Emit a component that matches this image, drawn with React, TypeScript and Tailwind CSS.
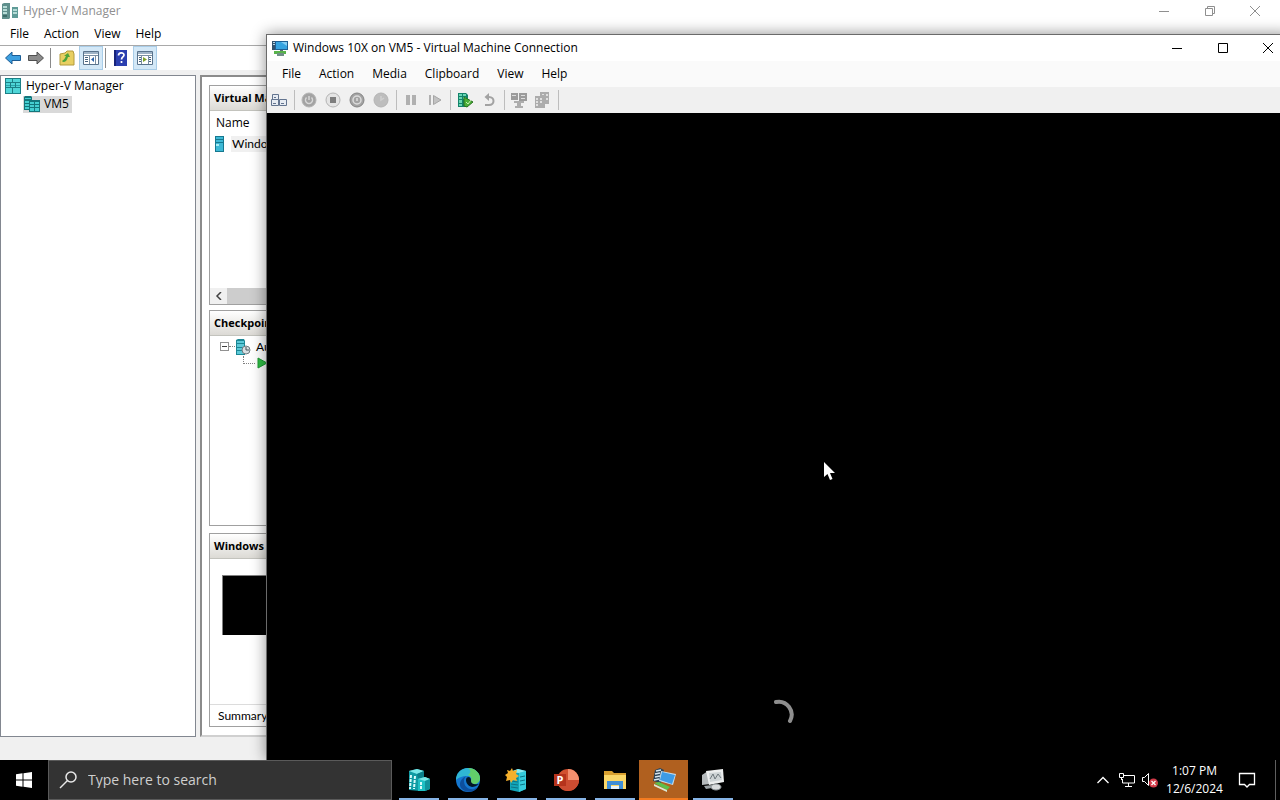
import React from 'react';

interface IconProps {
  className?: string;
}

/* ---------- Icons ---------- */

const ServerPairIcon: React.FC<IconProps> = ({ className = 'h-4 w-4' }) => (
  <svg className={className} viewBox="0 0 16 16" aria-hidden="true">
    <path d="M0 1l2-1h6v15l-1 1H0z" fill="#5f8f8c" />
    <path d="M1 3h4v2H1zM1 6h4v2H1zM1 9h4v2H1z" fill="#b5dbd6" />
    <path d="M1 12h4v2H1z" fill="#3c6c69" />
    <path d="M10 4h6v11h-6z" fill="#5f9b97" />
    <path d="M11 6h4v2h-4zM11 9h4v2h-4z" fill="#b5dbd6" />
  </svg>
);

const ServerTableIcon: React.FC<IconProps> = ({ className = 'h-4 w-4' }) => (
  <svg className={className} viewBox="0 0 16 16" aria-hidden="true">
    <path d="M0 0h16v16H0z" fill="#1c7f86" />
    <path d="M1 1h6v3H1zM8 1h7v3H8zM1 5h4v4H1zM6 5h4v4H6zM11 5h4v4h-4zM1 10h6v5H1zM8 10h7v5H8z" fill="#4fd6d8" />
    <path d="M1 7h4v1H1zM6 7h4v1H6zM11 7h4v1h-4z" fill="#2aa5ac" />
  </svg>
);

const HostIcon: React.FC<IconProps> = ({ className = 'h-4 w-4' }) => (
  <svg className={className} viewBox="0 0 16 16" aria-hidden="true">
    <path d="M0 1l1-1h6l1 1v3h8v12H5v-2H0z" fill="#14767c" />
    <path d="M1 2h6v1H1zM1 5h4v2H1zM1 8h4v2H1zM1 11h4v2H1z" fill="#45cfd2" />
    <path d="M6 6h4v2H6zM6 9h4v2H6zM6 12h4v3H6zM11 6h4v2h-4zM11 9h4v2h-4zM11 12h4v3h-4z" fill="#45cfd2" />
  </svg>
);

const MachineIcon: React.FC<IconProps> = ({ className = 'h-4 w-4' }) => (
  <svg className={className} viewBox="0 0 16 16" aria-hidden="true">
    <path d="M3 0h9v16H3z" fill="#16788f" />
    <path d="M4 1h7v2H4zM4 4h7v2H4zM4 7h7v8H4z" fill="#3db9d6" />
    <path d="M4 8h3v2H4z" fill="#a6ecf5" />
  </svg>
);

const CheckpointIcon: React.FC<IconProps> = ({ className = 'h-4 w-4' }) => (
  <svg className={className} viewBox="0 0 16 16" aria-hidden="true">
    <path d="M0 1l2-1h6l1 2v14H0z" fill="#1b8795" />
    <path d="M1 2h7v2H1zM1 5h7v3H1zM1 9h7v2H1zM1 12h7v3H1z" fill="#5cc9d8" />
    <circle cx="10" cy="11" r="4" fill="#d9dfe2" stroke="#6f7b80" />
    <path d="M10 8v3h3" fill="none" stroke="#46555b" />
  </svg>
);

const ArrowIcon: React.FC<{ back?: boolean }> = ({ back }) => (
  <svg className="h-4 w-4" viewBox="0 0 16 16" aria-hidden="true">
    {back ? (
      <path d="M.5 8L7 2v3.500h8.500v5H7V14z" fill="#3c9fe0" stroke="#1c5c94" />
    ) : (
      <path d="M15.500 8L9 2v3.500H.5v5H9V14z" fill="#8b8b8b" stroke="#4f4f4f" />
    )}
  </svg>
);

const FolderUpIcon = () => (
  <svg className="h-4 w-4" viewBox="0 0 16 16" aria-hidden="true">
    <path d="M1 4l5-1 2-2h6l1 3v11H1z" fill="#e8cf62" stroke="#b39a3c" />
    <path d="M4 12c3 0 4-2 5-5h2L9 3 5 6h2c-1 2-2 4-4 5z" fill="#4da33a" />
  </svg>
);

const ConsoleTreeIcon = () => (
  <svg className="h-4 w-4" viewBox="0 0 16 16" aria-hidden="true">
    <path d="M.5 1.500h15v13H.5z" fill="#fff" stroke="#59738c" />
    <path d="M1 2h14v2H1z" fill="#9fb4c7" />
    <path d="M6.500 5v9M12.500 5v9M1 5.500h14" stroke="#7b90a3" />
    <path d="M2 7.500h3M2 9.500h3M2 11.500h3" stroke="#47637e" />
    <path d="M11 7v5L8 9.500z" fill="#2b62a8" />
  </svg>
);

const HelpIcon = () => (
  <svg className="h-4 w-4" viewBox="0 0 16 16" aria-hidden="true">
    <path d="M1 0h13v16H1z" fill="#2b3fb0" />
    <path d="M1 0h2v16H1z" fill="#17237a" />
    <path d="M5.500 5.500c0-3.500 5.500-3.500 5.500-.5 0 2-2.500 2-2.500 4.500M8.500 11v2" fill="none" stroke="#fff" strokeWidth="1.700" />
  </svg>
);

const ActionPaneIcon = () => (
  <svg className="h-4 w-4" viewBox="0 0 16 16" aria-hidden="true">
    <path d="M.5 1.500h15v13H.5z" fill="#fff" stroke="#59738c" />
    <path d="M1 2h14v2H1z" fill="#9fb4c7" />
    <path d="M4.500 5v9M11.500 5v9M1 5.500h14" stroke="#7b90a3" />
    <path d="M2 7.500h2M2 9.500h2M2 11.500h2M12 7.500h2M12 9.500h2M12 11.500h2" stroke="#47637e" />
    <path d="M6 7v5l4-2.500z" fill="#7fa32b" />
  </svg>
);

const ConnectionIcon: React.FC<IconProps> = ({ className = 'h-4 w-4' }) => (
  <svg className={className} viewBox="0 0 16 16" aria-hidden="true">
    <path d="M0 1h5v9H0z" fill="#32506b" />
    <path d="M1 2h3v1H1zM1 4h3v1H1z" fill="#b9d6e6" />
    <path d="M3 1h13v9H3z" fill="#1f5f94" />
    <path d="M4 2h11v7H4z" fill="#36a3e0" />
    <path d="M9 2h6v4z" fill="#83cdf3" />
    <path d="M8 10h3v2H8z" fill="#5d6d77" />
    <path d="M2 11h12v3H2z" fill="#58b44a" />
    <path d="M5 13h7v3H5z" fill="#6f8f86" />
  </svg>
);

const CtrlAltDelIcon = () => (
  <svg className="h-4 w-4" viewBox="0 0 16 16" aria-hidden="true">
    <path d="M1.500 2.500h6v5h-6zM.5 7.500h7v6h-7zM8.500 7.500h7v6h-7z" fill="#e7ecf3" stroke="#63748f" />
    <path d="M3 5.500h2M2 11.500h3M10 11.500h3" stroke="#63748f" />
  </svg>
);

const RoundIcon: React.FC<{ kind: 'start' | 'stop' | 'shutdown' | 'save' }> = ({ kind }) => (
  <svg className="h-4 w-4" viewBox="0 0 16 16" aria-hidden="true">
    <circle
      cx="8"
      cy="8"
      r="7"
      fill={kind === 'stop' ? '#e4e4e4' : kind === 'save' ? '#bdbdbd' : '#a3a3a3'}
      stroke={kind === 'shutdown' ? '#858585' : '#b4b4b4'}
    />
    {kind === 'start' && <path d="M5.500 5.500a3.500 3.500 0 105 0M8 4v4" fill="none" stroke="#d8d8d8" strokeWidth="1.500" />}
    {kind === 'stop' && <path d="M5 5h6v6H5z" fill="#7d7d7d" />}
    {kind === 'shutdown' && (
      <>
        <circle cx="8" cy="8" r="4" fill="none" stroke="#dcdcdc" strokeWidth="1.500" />
        <path d="M8 6v3" stroke="#dcdcdc" strokeWidth="1.500" />
      </>
    )}
    {kind === 'save' && <path d="M8 4v4l3-2" fill="none" stroke="#cfcfcf" strokeWidth="1.500" />}
  </svg>
);

const PauseIcon = () => (
  <svg className="h-4 w-4" viewBox="0 0 16 16" aria-hidden="true">
    <path d="M3 3h4v10H3zM9 3h4v10H9z" fill="#b0b0b0" />
  </svg>
);

const ResetIcon = () => (
  <svg className="h-4 w-4" viewBox="0 0 16 16" aria-hidden="true">
    <path d="M2 3h2v10H2z" fill="#b0b0b0" />
    <path d="M6.500 3.500v9L14 8z" fill="#c2c2c2" stroke="#a6a6a6" />
  </svg>
);

const CheckpointNowIcon = () => (
  <svg className="h-4 w-4" viewBox="0 0 16 16" aria-hidden="true">
    <path d="M1 1h8l2 2v12H1z" fill="#13836a" />
    <path d="M2 2h3v2H2zM6 2h3v2H6zM2 5h3v2H2zM6 5h3v2H6zM2 8h3v3H2zM2 12h3v2H2z" fill="#69d6b4" />
    <path d="M7 5l9 5-6 5-3-1z" fill="#4bb037" stroke="#2a7222" />
    <path d="M9 10l2 2 3-4" fill="none" stroke="#c6efb5" />
  </svg>
);

const RevertIcon = () => (
  <svg className="h-4 w-4" viewBox="0 0 16 16" aria-hidden="true">
    <path d="M4 13h4c6 0 6-8 0-8H6" fill="none" stroke="#a2a2a2" strokeWidth="2" />
    <path d="M8 1v8L3.500 5z" fill="#a2a2a2" />
  </svg>
);

const EnhancedIcon = () => (
  <svg className="h-4 w-4" viewBox="0 0 16 16" aria-hidden="true">
    <path d="M0 1h7v7H0zM8 1h8v8H8z" fill="#9b9b9b" />
    <path d="M1 3h4v1H1zM10 3h4v1h-4zM10 6h4v1h-4z" fill="#dcdcdc" />
    <path d="M3 9h10v2H3zM6 11h4v3H6zM4 14h8v2H4z" fill="#adadad" />
  </svg>
);

const ShareIcon = () => (
  <svg className="h-4 w-4" viewBox="0 0 16 16" aria-hidden="true">
    <path d="M5 0h9v12H5zM0 4h10v12H0z" fill="#acacac" />
    <path d="M1 6h2v2H1zM5 6h2v2H5zM1 9h2v2H1zM5 9h2v2H5zM1 12h2v2H1zM7 2h2v1H7zM11 2h2v2h-2zM11 6h2v2h-2z" fill="#e0e0e0" />
  </svg>
);

const MinimizeIcon = () => (
  <svg className="h-3 w-3" viewBox="0 0 12 12" aria-hidden="true">
    <path d="M1 6.500h10" stroke="currentColor" />
  </svg>
);

const MaximizeIcon = () => (
  <svg className="h-3 w-3" viewBox="0 0 12 12" aria-hidden="true">
    <path d="M1.500 1.500h9v9h-9z" fill="none" stroke="currentColor" />
  </svg>
);

const RestoreIcon = () => (
  <svg className="h-3 w-3" viewBox="0 0 12 12" aria-hidden="true">
    <path d="M1.500 3.500h7v7h-7zM3.500 3.500v-2h7v7h-2" fill="none" stroke="currentColor" />
  </svg>
);

const CloseIcon = () => (
  <svg className="h-3 w-3" viewBox="0 0 12 12" aria-hidden="true">
    <path d="M1 1l10 10M11 1L1 11" stroke="currentColor" />
  </svg>
);

/* ---------- Taskbar icons ---------- */

const HyperVTaskIcon = () => (
  <svg className="h-6 w-6" viewBox="0 0 24 24" aria-hidden="true">
    <path d="M2 3l8-2 7 2v6l-4 14-11-1z" fill="#109ca4" />
    <path d="M2 3l8-2 7 2-7 3z" fill="#7ce9e9" />
    <path d="M10 6l7-3v6l-6 2z" fill="#0b7f8a" />
    <path d="M11 11l7-2 5 2v10l-5 2h-7z" fill="#1fc0c4" />
    <path d="M11 11l7-2 5 2-5 2z" fill="#7ae6e6" />
    <path d="M18 13l5-2v10l-5 2z" fill="#11939c" />
    <path d="M4 7l-1 14M8 8L7 21M14 14v7" stroke="#d9fbfa" strokeWidth="2" strokeDasharray="3 1" />
  </svg>
);

const EdgeIcon = () => (
  <svg className="h-6 w-6" viewBox="0 0 24 24" aria-hidden="true">
    <circle cx="12" cy="12" r="12" fill="#1577d0" />
    <path d="M0 12C0 5 5 0 12 0s12 5 12 10c0 4-3 6-6 6s-4-1-3-3c1-3-1-5-4-5-5 0-9 2-11 4z" fill="#2fb6d4" />
    <path d="M12 0c7 0 12 5 12 10 0 4-3 6-6 6s-4-1-3-3c1-3 0-5-3-6 3-2 3-5 0-7z" fill="#62cf6a" />
    <path d="M8 13c0 6 5 9 10 8l4-2c-4 6-12 6-16 2-4-4-2-10 4-13-1 1-2 3-2 5z" fill="#0d4f9e" />
    <path d="M10 12c0-2 1-3 3-3 2 1 2 2 2 4s2 4 8 3c-2 2-5 3-7 3-4-1-6-4-6-7z" fill="#031627" />
  </svg>
);

const ServerStarIcon = () => (
  <svg className="h-6 w-6" viewBox="0 0 24 24" aria-hidden="true">
    <path d="M5 4l8-3 8 2v18l-7 3-9-2z" fill="#12a5b8" />
    <path d="M14 5l7-2v18l-7 3z" fill="#35cbdc" />
    <path d="M5 4l8-3 8 2-7 2z" fill="#8cecf2" />
    <path d="M6 10l7 1M6 13l7 1M6 16l7 1M6 19l7 1M15 9l5-1M15 13l5-1M15 17l5-1" stroke="#0b7486" />
    <path d="M7 0l1 3 4-1-1 4 3 2-3 2 1 3-4-1-2 3-1-3-4 1 1-4-2-2 3-2-1-3 3 1z" fill="#f6b02c" />
  </svg>
);

const PowerPointIcon = () => (
  <svg className="h-6 w-6 overflow-visible" viewBox="0 0 24 24" aria-hidden="true">
    <circle cx="14" cy="12" r="11" fill="#d2512f" />
    <path d="M14 1a11 11 0 0111 11H14z" fill="#f4906f" />
    <path d="M3 12h22a11 11 0 01-22 0z" fill="#cc4c31" />
    <path d="M0 6h12v12H0z" fill="#b5331c" />
    <text x="6" y="16" textAnchor="middle" fontSize="11" fontWeight="700" fill="#fff" fontFamily="Open Sans, sans-serif">
      P
    </text>
  </svg>
);

const ExplorerIcon = () => (
  <svg className="h-6 w-6" viewBox="0 0 24 24" aria-hidden="true">
    <path d="M1 3h8l2 2h12v16H1z" fill="#d9a02f" />
    <path d="M1 7h22v14H1z" fill="#fbd768" />
    <path d="M4 21v-8h16v8h-4v-4H8v4z" fill="#3f8ed6" />
    <path d="M8 18h8v3H8z" fill="#e9f3fb" />
  </svg>
);

const VmConnectTaskIcon = () => (
  <svg className="h-6 w-6" viewBox="0 0 24 24" aria-hidden="true">
    <path d="M3 2l5-2 4 2-3 13-8-2z" fill="#2c4256" />
    <path d="M4 3l5-1M3 6l5-1M3 9l5-1M2 12l5-1" stroke="#d7e5ee" strokeWidth="1.500" />
    <path d="M9 3l15 3-3 11-14-4z" fill="#c5dcec" />
    <path d="M10 4l13 3-3 9-12-4z" fill="#3d9be6" />
    <path d="M2 15l5-1 11 5-3 3z" fill="#5cc04b" />
    <path d="M2 16l13 6v2L2 18z" fill="#dbe9d5" />
  </svg>
);

const MonitorTaskIcon = () => (
  <svg className="h-6 w-6" viewBox="0 0 24 24" aria-hidden="true">
    <path d="M1 7l6-4 2 13-8 1z" fill="#b5babc" />
    <path d="M5 3l17-2 1 13-15 3z" fill="#eceeee" />
    <path d="M8 5l12-1 1 8-12 2z" fill="#cdd3d5" />
    <path d="M9 11l3-5 2 5 3-5 3 4" fill="none" stroke="#6e787d" />
    <path d="M3 18l8-1v3l-6 1z" fill="#9da4a7" />
    <ellipse cx="15" cy="19" rx="5" ry="3" fill="#d8dbdc" stroke="#8d9497" />
  </svg>
);

/* ---------- Shared pieces ---------- */

const MenuBar: React.FC<{ label: string; items: string[]; className: string }> = ({ label, items, className }) => (
  <nav aria-label={label} className={`flex items-center ${className}`}>
    {items.map((item) => (
      <button key={item} type="button">
        {item}
      </button>
    ))}
  </nav>
);

const CaptionButtons: React.FC<{ restored?: boolean }> = ({ restored }) => (
  <div className="ml-auto flex self-stretch">
    <button type="button" aria-label="Minimize" className="flex w-[46px] items-center justify-center">
      <MinimizeIcon />
    </button>
    <button type="button" aria-label={restored ? 'Maximize' : 'Restore'} className="flex w-[45px] items-center justify-center">
      {restored ? <MaximizeIcon /> : <RestoreIcon />}
    </button>
    <button type="button" aria-label="Close" className="flex w-[46px] items-center justify-center">
      <CloseIcon />
    </button>
  </div>
);

const PanelHeader: React.FC<{ children: React.ReactNode }> = ({ children }) => (
  <h2 className="flex h-[25px] items-center border-b border-[#c3c3bd] bg-linear-to-b from-white to-[#dcdad5] pl-1 text-[11px] font-bold whitespace-nowrap">
    {children}
  </h2>
);

/* ---------- Hyper-V Manager ---------- */

const HyperVManager = () => (
  <section aria-label="Hyper-V Manager" className="flex h-full flex-col bg-white">
    <header className="flex h-[22px] items-center px-0.5 text-[#8f8f8f]">
      <ServerPairIcon className="h-4 w-4" />
      <h1 className="ml-[5px]">Hyper-V Manager</h1>
      <CaptionButtons />
    </header>
    <MenuBar label="Manager menu" items={['File', 'Action', 'View', 'Help']} className="h-[23px] gap-[15px] pl-2.5" />

    <div className="flex h-[25px] shrink-0 items-center border-t border-[#a9a9a9] pl-0.5">
      <button type="button" aria-label="Back" className="flex h-6 w-[22px] items-center justify-center">
        <ArrowIcon back />
      </button>
      <button type="button" aria-label="Forward" className="flex h-6 w-6 items-center justify-center">
        <ArrowIcon />
      </button>
      <span className="mr-1 ml-0.5 h-5 w-px bg-[#8a8a8a]" />
      <button type="button" aria-label="Up one level" className="flex h-6 w-6 items-center justify-center">
        <FolderUpIcon />
      </button>
      <button type="button" aria-label="Console tree" className="flex h-6 w-6 items-center justify-center border border-[#a9cde8] bg-[#d3e8f7]">
        <ConsoleTreeIcon />
      </button>
      <span className="mr-[3px] ml-0.5 h-5 w-px bg-[#8a8a8a]" />
      <button type="button" aria-label="Help topics" className="flex h-6 w-6 items-center justify-center">
        <HelpIcon />
      </button>
      <button type="button" aria-label="Action pane" className="flex h-6 w-6 items-center justify-center border border-[#a9cde8] bg-[#d3e8f7]">
        <ActionPaneIcon />
      </button>
    </div>

    <div className="flex min-h-0 flex-1 gap-1 bg-[#f0f0f0] pt-[5px]">
      <aside className="w-[196px] shrink-0 border border-[#828790] bg-white pt-px">
        <ul>
          <li className="flex h-[18px] items-center gap-[5px] pl-1">
            <ServerTableIcon className="h-4 w-4" />
            Hyper-V Manager
          </li>
          <li className="flex h-[18px] items-center pl-[22px]">
            <span className="flex h-[17px] items-center gap-1 bg-[#d9d9d9] pr-[3px] pl-px">
              <HostIcon className="h-4 w-4" />
              VM5
            </span>
          </li>
        </ul>
      </aside>

      <main className="flex flex-1 flex-col border-2 border-[#8b8b8b] border-b-[#d0d0d0] bg-white px-[7px] pt-2 pb-2">
        <section className="flex flex-[220] flex-col border border-[#a0a0a0]">
          <PanelHeader>Virtual Machines</PanelHeader>
          <table className="w-full text-left">
            <thead>
              <tr className="h-[23px]">
                <th className="pl-1.5 font-normal">Name</th>
              </tr>
            </thead>
            <tbody>
              <tr className="h-5">
                <td className="pl-0.5">
                  <span className="flex items-center gap-[3px] font-['Lato','Open_Sans',sans-serif]">
                    <MachineIcon className="h-4 w-4" />
                    <span className="bg-[#f0f0f0] px-px">Windows 10X</span>
                  </span>
                </td>
              </tr>
            </tbody>
          </table>
          <div className="mt-auto flex h-4 bg-[#f0f0f0]">
            <button type="button" aria-label="Scroll left" className="flex w-[17px] items-center justify-center">
              <svg className="h-2 w-2" viewBox="0 0 8 8" aria-hidden="true">
                <path d="M6 0L2 4l4 4" fill="none" stroke="#404040" strokeWidth="1.500" />
              </svg>
            </button>
            <span className="w-1/2 bg-[#cdcdcd]" />
          </div>
        </section>

        <section className="mt-[5px] flex-[216] border border-[#a0a0a0]">
          <PanelHeader>Checkpoints</PanelHeader>
          <ul className="pt-0.5 font-['Lato','Open_Sans',sans-serif]">
            <li className="flex h-[18px] items-center pl-2.5">
              <button type="button" aria-label="Collapse" className="flex h-[9px] w-[9px] items-center justify-center border border-[#919191]">
                <span className="h-px w-[5px] bg-[#404040]" />
              </button>
              <span className="mr-px w-1.5 border-t border-dotted border-[#808080]" />
              <CheckpointIcon className="h-4 w-4" />
              <span className="ml-1 whitespace-nowrap">Automatic Checkpoint</span>
            </li>
            <li className="flex h-4 items-center pl-[33px]">
              <span className="mb-2 h-2 w-3 border-b border-l border-dotted border-[#808080]" />
              <svg className="mb-0.5 ml-0.5 h-3 w-3" viewBox="0 0 12 12" aria-hidden="true">
                <path d="M1 1l9 5-9 5z" fill="#2fbf45" stroke="#1d9a33" />
              </svg>
              <span className="ml-1">Now</span>
            </li>
          </ul>
        </section>

        <section className="mt-[7px] flex flex-[194] flex-col border border-[#a0a0a0]">
          <PanelHeader>Windows 10X</PanelHeader>
          <div className="mt-4 ml-3 h-[60px] w-20 border-t border-l border-[#808080] bg-black" />
          <div className="mt-auto flex h-[22px] items-center border-t border-[#dcdcdc] pl-2 font-['Lato','Open_Sans',sans-serif]">
            Summary
          </div>
        </section>
      </main>
    </div>
    <footer className="h-[23px] bg-[#f0f0f0]" />
  </section>
);

/* ---------- Virtual Machine Connection ---------- */

const ToolButton: React.FC<{ label: string; children: React.ReactNode }> = ({ label, children }) => (
  <button type="button" aria-label={label} className="flex h-6 w-6 items-center justify-center">
    {children}
  </button>
);

const ToolSeparator = () => (
  <span className="flex h-5 w-1.5 justify-center">
    <span className="w-px bg-[#bdbdbd]" />
  </span>
);

const ConnectionWindow = () => (
  <section
    aria-label="Virtual Machine Connection"
    className="absolute top-[34px] -right-[11px] bottom-0 left-[266px] flex flex-col border-t border-l border-[#6a6a6a] bg-black shadow-[0_0_14px_rgba(0,0,0,0.45)]"
  >
    <header className="flex h-[26px] items-center bg-white pl-[5px]">
      <ConnectionIcon className="h-4 w-4" />
      <h2 className="ml-[5px]">Windows 10X on VM5 - Virtual Machine Connection</h2>
      <CaptionButtons restored />
    </header>
    <MenuBar
      label="Connection menu"
      items={['File', 'Action', 'Media', 'Clipboard', 'View', 'Help']}
      className="h-[26px] gap-[18px] bg-[#fafafa] pl-[15px]"
    />
    <div className="flex h-[26px] items-center bg-[#f0f0f0]">
      <ToolButton label="Ctrl+Alt+Delete"><CtrlAltDelIcon /></ToolButton>
      <ToolSeparator />
      <ToolButton label="Start"><RoundIcon kind="start" /></ToolButton>
      <ToolButton label="Turn off"><RoundIcon kind="stop" /></ToolButton>
      <ToolButton label="Shut down"><RoundIcon kind="shutdown" /></ToolButton>
      <ToolButton label="Save"><RoundIcon kind="save" /></ToolButton>
      <ToolSeparator />
      <ToolButton label="Pause"><PauseIcon /></ToolButton>
      <ToolButton label="Reset"><ResetIcon /></ToolButton>
      <ToolSeparator />
      <ToolButton label="Checkpoint"><CheckpointNowIcon /></ToolButton>
      <ToolButton label="Revert"><RevertIcon /></ToolButton>
      <ToolSeparator />
      <ToolButton label="Enhanced session"><EnhancedIcon /></ToolButton>
      <ToolButton label="Share"><ShareIcon /></ToolButton>
      <ToolSeparator />
    </div>

    {/* Guest screen */}
    <div className="relative flex-1 bg-black">
      <svg className="absolute top-[349px] left-[557px] h-[18px] w-[11px]" viewBox="0 0 11 18" aria-hidden="true">
        <path d="M0 0v15l3.500-3 2.500 6 2.500-1L6 11h5z" fill="#fff" />
      </svg>
      <svg className="absolute bottom-[33px] left-[505px] h-7 w-6" viewBox="0 0 24 28" aria-hidden="true">
        <path d="M4 3a13 13 0 0114 19" fill="none" stroke="#8e8e8e" strokeWidth="4" strokeLinecap="round" />
      </svg>
    </div>
  </section>
);

/* ---------- Taskbar ---------- */

const apps = [
  { name: 'Hyper-V Manager', icon: <HyperVTaskIcon />, active: false },
  { name: 'Microsoft Edge', icon: <EdgeIcon />, active: false },
  { name: 'Server Manager', icon: <ServerStarIcon />, active: false },
  { name: 'PowerPoint', icon: <PowerPointIcon />, active: false },
  { name: 'File Explorer', icon: <ExplorerIcon />, active: false },
  { name: 'Virtual Machine Connection', icon: <VmConnectTaskIcon />, active: true },
  { name: 'Performance Monitor', icon: <MonitorTaskIcon />, active: false },
];

const Taskbar = () => (
  <footer className="flex h-10 shrink-0 items-stretch bg-black text-white">
    <button type="button" aria-label="Start" className="flex w-12 items-center justify-center">
      <svg className="h-4 w-4" viewBox="0 0 16 16" aria-hidden="true">
        <path d="M0 2.200l6.500-.9v6.200H0zM7.500 1.200L16 0v7.500H7.500zM0 8.500h6.500v6.200L0 13.800zM7.500 8.500H16V16l-8.500-1.200z" fill="#fff" />
      </svg>
    </button>
    <label className="flex w-[344px] items-center border border-[#5a5a5a] bg-[#333] pl-2.5">
      <svg className="h-5 w-5" viewBox="0 0 20 20" aria-hidden="true">
        <circle cx="12" cy="7" r="5" fill="none" stroke="#e8e8e8" strokeWidth="1.500" />
        <path d="M8.500 10.500L1 18" stroke="#e8e8e8" strokeWidth="1.500" />
      </svg>
      <input
        type="text"
        aria-label="Search"
        placeholder="Type here to search"
        className="ml-[9px] flex-1 bg-transparent text-[14px] outline-none placeholder:text-[#cfcfcf]"
      />
    </label>
    <div className="flex pl-0.5">
      {apps.map((app) => (
        <button
          key={app.name}
          type="button"
          aria-label={app.name}
          className={
            app.active
              ? 'flex w-[49px] flex-col items-center border-b-2 border-[#f47b20] bg-[#b0601f] pt-2'
              : 'flex w-[49px] flex-col items-center pt-2'
          }
        >
          {app.icon}
          {!app.active && <span className="mt-auto h-0.5 w-10 bg-[#86b4e6]" />}
        </button>
      ))}
    </div>

    <div className="ml-auto flex items-center">
      <button type="button" aria-label="Show hidden icons">
        <svg className="h-3 w-3" viewBox="0 0 12 12" aria-hidden="true">
          <path d="M.5 9L6 3.500 11.500 9" fill="none" stroke="#fff" strokeWidth="1.300" />
        </svg>
      </button>
      <button type="button" aria-label="Network" className="ml-2.5">
        <svg className="h-4 w-4" viewBox="0 0 16 16" aria-hidden="true">
          <path d="M5 3.500h10.500v7.500H3.500V7M9.500 11v3M6 14.500h7" fill="none" stroke="#fff" />
          <path d="M.5 1.500h4v4h-4zM2.500 5.500V8" fill="none" stroke="#fff" />
        </svg>
      </button>
      <button type="button" aria-label="Volume muted" className="ml-[7px]">
        <svg className="h-4 w-4" viewBox="0 0 16 16" aria-hidden="true">
          <path d="M.5 5.500h2l4-4v12l-4-4h-2z" fill="none" stroke="#fff" />
          <circle cx="11.500" cy="11" r="4.500" fill="#d23a48" />
          <path d="M9.500 9l4 4M13.500 9l-4 4" stroke="#fff" strokeWidth="1.300" />
        </svg>
      </button>
      <div className="w-[73px] text-center leading-[18px]">
        <div>1:07 PM</div>
        <div>12/6/2024</div>
      </div>
      <button type="button" aria-label="Notifications" className="flex w-8 items-center justify-center">
        <svg className="h-[18px] w-[18px]" viewBox="0 0 18 18" aria-hidden="true">
          <path d="M1.500 2.500h15v11h-5L9 16l-2.500-2.500h-5z" fill="none" stroke="#fff" strokeWidth="1.300" />
        </svg>
      </button>
      <button type="button" aria-label="Show desktop" className="ml-3 h-10 w-[5px] border-l border-[#5f5f5f]" />
    </div>
  </footer>
);

const App = () => (
  <div className="flex h-screen flex-col overflow-hidden bg-black font-['Open_Sans','Noto_Sans',sans-serif] text-[12px] leading-4 text-black">
    <div className="relative min-h-0 flex-1 overflow-hidden">
      <HyperVManager />
      <ConnectionWindow />
    </div>
    <Taskbar />
  </div>
);

export default App;
